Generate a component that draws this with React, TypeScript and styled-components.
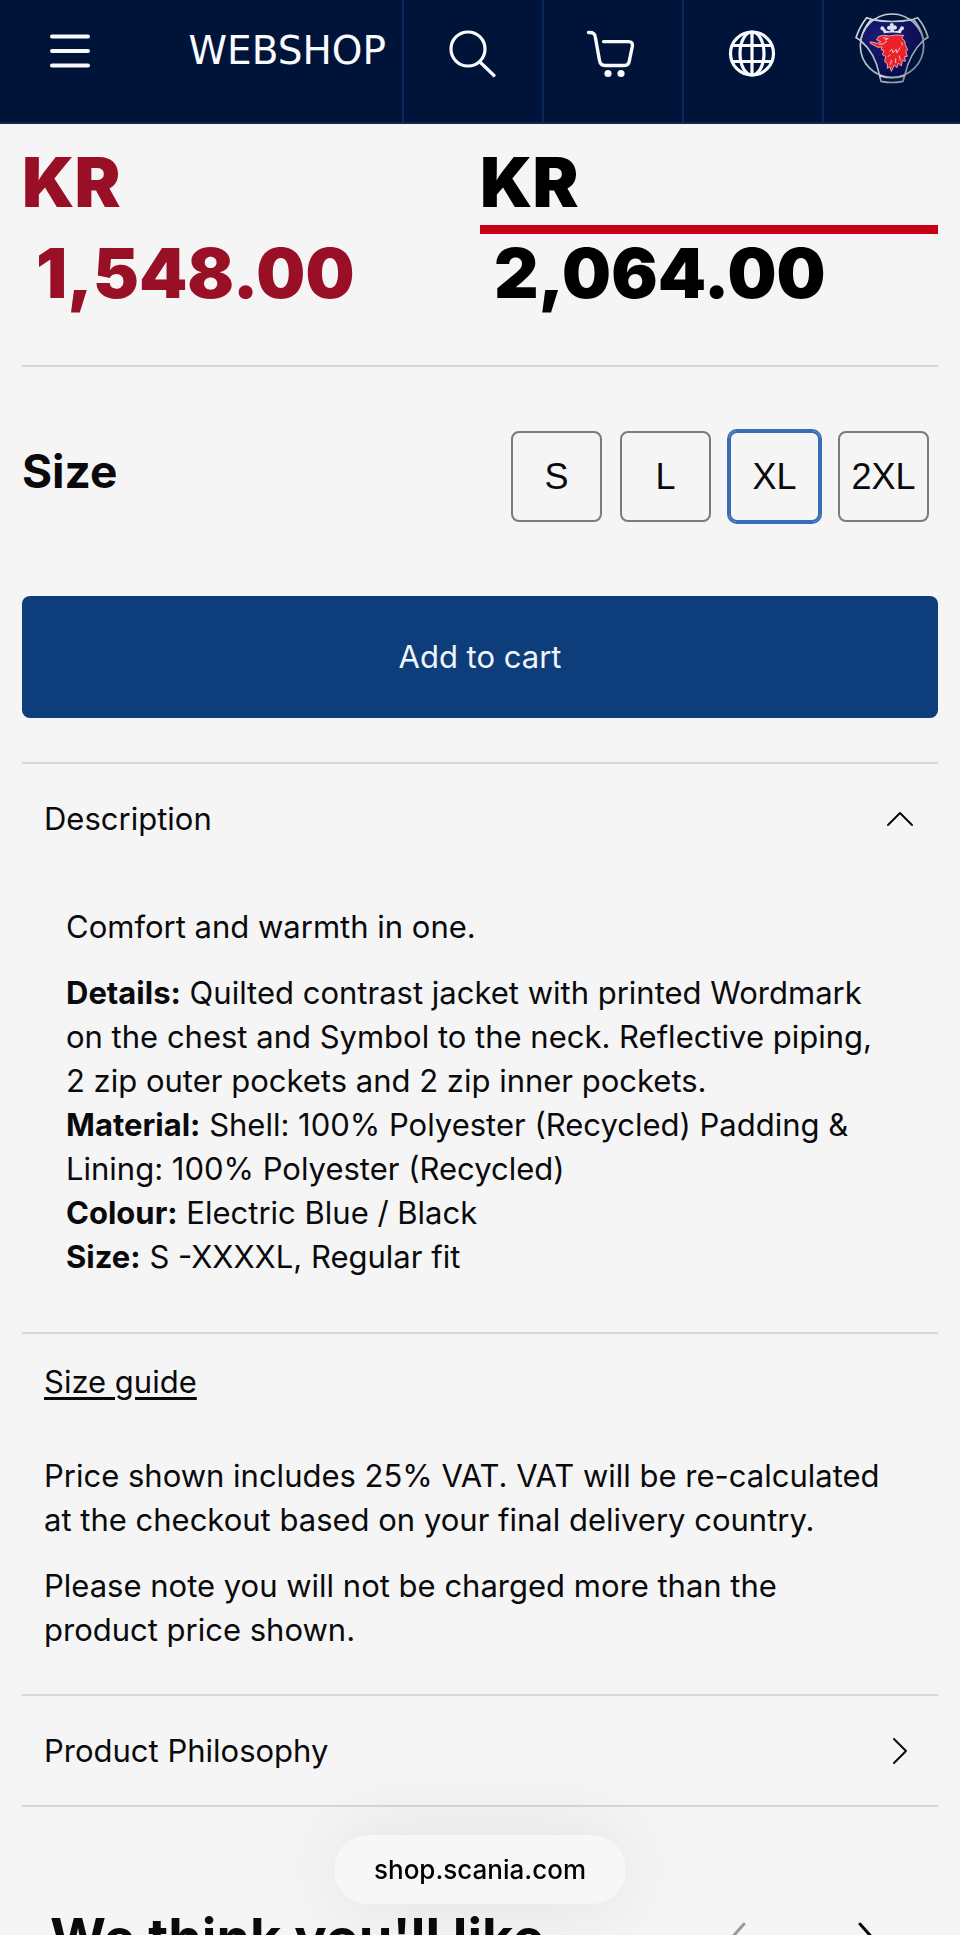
import React, { useState } from "react";
import styled, { createGlobalStyle } from "styled-components";

const sans = `Inter, "Liberation Sans", sans-serif`;
const plain = `"Liberation Sans", Arial, sans-serif`;
const wide = `"DejaVu Sans", Verdana, sans-serif`;

const GlobalStyle = createGlobalStyle`
  *, *::before, *::after { box-sizing: border-box; }
  body { margin: 0; background: #f5f5f5; }
  h2, p { margin: 0; padding: 0; }
  button { font: inherit; color: inherit; background: none; border: 0; padding: 0; cursor: pointer; }
  svg { display: block; }
`;

const Screen = styled.div`
  height: 100vh;
  overflow-x: hidden;
  overflow-y: auto;
  scrollbar-width: none;
  background: #f5f5f5;
  color: #0a0a0c;
  font-family: ${sans};
  font-size: 31px;
  line-height: 44px;
`;

const Header = styled.header`
  display: flex;
  height: 124px;
  background: #00143a;
  border-bottom: 2px solid #16264a;
  color: #f8fafd;
`;

const MenuButton = styled.button`
  flex: none;
  width: 140px;
  padding: 0 0 20px 50px;
`;

const ShopName = styled.a`
  flex: 1;
  padding: 29px 16px 0 0;
  text-align: right;
  font-family: ${wide};
  font-size: 39px;
  color: inherit;
  text-decoration: none;
`;

const HeaderCell = styled.button`
  flex: 0 0 140px;
  display: flex;
  justify-content: center;
  padding-top: 26px;
  border-left: 2px solid #08285a;
`;

const LogoCell = styled.a`
  flex: 0 0 138px;
  display: flex;
  justify-content: center;
  padding-top: 12px;
  border-left: 2px solid #08285a;
`;

const Main = styled.main`
  padding: 13px 22px 0;
`;

const Prices = styled.section`
  display: grid;
  grid-template-columns: 1fr 1fr;
  padding-bottom: 46px;
  border-bottom: 2px solid #d5d6e0;
`;

const Price = styled.div<{ $old?: boolean }>`
  position: relative;
  font-size: 69px;
  font-weight: 900;
  line-height: 91px;
  color: ${(p) => (p.$old ? "#000" : "#990f26")};

  ${(p) =>
    p.$old &&
    `&::after {
      content: "";
      position: absolute;
      left: 0;
      right: 0;
      top: calc(50% - 3px);
      height: 9px;
      background: #c80015;
    }`}
`;

const Amount = styled.span`
  display: block;
  padding-left: 14px;
`;

const SizeRow = styled.section`
  display: flex;
  align-items: center;
  justify-content: space-between;
  padding: 64px 9px 74px 0;
`;

const SizeTitle = styled.h2`
  padding-bottom: 12px;
  font-size: 46px;
  line-height: 56px;
`;

const SizeList = styled.div`
  display: flex;
  gap: 18px;
`;

const SizeButton = styled.button<{ $on: boolean }>`
  width: 91px;
  height: 91px;
  border: 2px solid ${(p) => (p.$on ? "#386cb5" : "#7b7b7b")};
  border-radius: 8px;
  box-shadow: ${(p) => (p.$on ? "0 0 0 2px #386cb5" : "none")};
  font-family: ${plain};
  font-size: 36px;
`;

const AddButton = styled.button`
  display: block;
  width: 100%;
  height: 122px;
  border-radius: 8px;
  background: #0d3d7a;
  color: #f1f5fa;
`;

const Panels = styled.div`
  margin-top: 44px;
`;

const PanelToggle = styled.button`
  display: flex;
  align-items: center;
  justify-content: space-between;
  width: 100%;
  height: 111px;
  padding: 0 24px 0 22px;
  border-top: 2px solid #d5d6e0;
`;

const PanelBody = styled.div`
  display: grid;
  gap: 22px;
  padding: 32px 44px 53px;
`;

const Notes = styled.section`
  display: grid;
  justify-items: start;
  gap: 22px;
  padding: 26px 44px 42px 22px;
  border-top: 2px solid #d5d6e0;
`;

const SizeGuide = styled.a`
  margin-bottom: 28px;
  color: inherit;
  text-underline-offset: 4px;
`;

const Related = styled.section`
  display: flex;
  justify-content: space-between;
  padding: 101px 60px 40px 28px;
  border-top: 2px solid #d5d6e0;
`;

const RelatedTitle = styled.h2`
  font-size: 54px;
  line-height: 60px;
`;

const Arrows = styled.div`
  display: flex;
  gap: 112px;
  padding-top: 8px;
`;

const AddressPill = styled.div`
  position: fixed;
  left: 50%;
  bottom: 31px;
  transform: translateX(-50%);
  padding: 13px 40px 12px;
  border-radius: 35px;
  background: #f7f7f7;
  box-shadow: 0 0 80px rgba(0, 0, 0, 0.09);
  font-size: 26px;
  font-weight: 500;
  color: #000;
`;

const MenuIcon = () => (
  <svg width="40" height="34" viewBox="0 0 40 34" stroke="currentColor" strokeWidth="4" strokeLinecap="round">
    <path d="M2 2.4H38M2 17H38M2 31.6H38" />
  </svg>
);

const SearchIcon = () => (
  <svg width="56" height="56" viewBox="0 0 56 56" fill="none" stroke="currentColor" strokeWidth="3.2" strokeLinecap="round">
    <circle cx="23" cy="23" r="17" />
    <path d="M35.5 36.5L49 49.5" />
  </svg>
);

const CartIcon = () => (
  <svg width="56" height="56" viewBox="0 0 56 56" fill="none" stroke="currentColor" strokeWidth="3.4" strokeLinecap="round" strokeLinejoin="round">
    <path d="M3.500 6.500C8 6.200 9.800 7.500 10.300 11L14.500 34.500C15.200 38 16.700 39.500 20 39.500H39.500C42.500 39.500 43.700 38.300 44.200 35.500L47.300 20.500C47.900 17 46.600 15.600 43.500 15.600H18.500" />
    <circle cx="23" cy="47.500" r="3.600" fill="currentColor" stroke="none" />
    <circle cx="36" cy="47.500" r="3.600" fill="currentColor" stroke="none" />
  </svg>
);

const GlobeIcon = () => (
  <svg width="56" height="56" viewBox="0 0 56 56" fill="none" stroke="currentColor" strokeWidth="3.2">
    <circle cx="27" cy="27.500" r="21.500" />
    <ellipse cx="27" cy="27.500" rx="12" ry="21.500" />
    <path d="M27 6V49M7.500 19.500H46.500M7.500 35.500H46.500" />
  </svg>
);

const Emblem = () => (
  <svg width="74" height="72" viewBox="44 37 222 216" fill="none">
    <defs>
      <linearGradient id="chrome" x1="0" y1="0" x2="1" y2="1">
        <stop offset="0" stopColor="#dfe3ea" />
        <stop offset="0.6" stopColor="#a9b0be" />
        <stop offset="1" stopColor="#6f7a8f" />
      </linearGradient>
      <radialGradient id="field" cx="0.35" cy="0.3" r="0.8">
        <stop offset="0" stopColor="#1c1c78" />
        <stop offset="1" stopColor="#060a45" />
      </radialGradient>
    </defs>
    <path d="M90 60Q155 74 221 60Q240 80 250 118Q215 160 193 226Q155 238 118 226Q98 160 61 122Q70 85 90 60Z" fill="url(#field)" />
    <g stroke="url(#chrome)" strokeWidth="5" strokeLinejoin="round">
      <circle cx="155" cy="138" r="95" />
      <path d="M93 59L79 54Q57 82 47 114L61 123Q104 160 117 224L122 245Q155 252 188 245L194 224Q208 162 250 121L263 113Q254 80 232 54L219 59Q155 72 93 59Z" />
      <path d="M93 59Q67 88 61 123M219 59Q244 88 250 121" />
      <path d="M117 228Q155 241 194 228" />
    </g>
    <path
      d="M131 101L127 92A6 6 0 1 1 132 86L138 93L149 95L151 88A6 6 0 1 1 150 80A6 6 0 1 1 159 80A6 6 0 1 1 160 88L162 95L173 93L179 86A6 6 0 1 1 185 92L181 101Q156 96 131 101Z"
      fill="#dfe5ee"
    />
    <path
      d="M114 111Q128 104 148 109L166 106L190 107L184 115Q196 122 195 135L202 151L196 154L201 170L193 171L195 185L186 182L183 199L174 190L170 204L162 196L153 215L149 201L141 206L141 192L133 186L136 170L126 165L131 153L122 150L126 142L113 143L90 131V126L112 131L122 126L109 121Z"
      fill="#ee2028"
      stroke="#e7a9b4"
      strokeWidth="3"
      strokeLinejoin="round"
    />
    <path
      d="M116 134Q130 136 140 124M128 114L144 117L133 121M147 156L155 149L158 160L167 149L169 160L180 143M142 172L150 164M151 195L153 180M166 190V176M180 182L177 168M184 128L186 138"
      stroke="#f0c3ca"
      strokeWidth="3"
    />
  </svg>
);

const Chevron = ({ points, w, h, color = "#0a0a0c", thick = 2 }: { points: string; w: number; h: number; color?: string; thick?: number }) => (
  <svg width={w} height={h} viewBox={`0 0 ${w} ${h}`} fill="none" stroke={color} strokeWidth={thick} strokeLinecap="round" strokeLinejoin="round">
    <polyline points={points} />
  </svg>
);

const ChevronSlot = styled.span`
  display: flex;
  justify-content: center;
  width: 28px;
`;

const sizes = ["S", "L", "XL", "2XL"];

export default function App() {
  const [size, setSize] = useState("XL");
  const [open, setOpen] = useState(true);

  return (
    <Screen>
      <GlobalStyle />
      <Header>
        <MenuButton aria-label="Menu">
          <MenuIcon />
        </MenuButton>
        <ShopName href="#shop">WEBSHOP</ShopName>
        <HeaderCell aria-label="Search">
          <SearchIcon />
        </HeaderCell>
        <HeaderCell aria-label="Cart">
          <CartIcon />
        </HeaderCell>
        <HeaderCell aria-label="Language">
          <GlobeIcon />
        </HeaderCell>
        <LogoCell href="#home" aria-label="Scania">
          <Emblem />
        </LogoCell>
      </Header>

      <Main>
        <Prices>
          <Price>
            KR <Amount>1,548.00</Amount>
          </Price>
          <Price $old>
            KR <Amount>2,064.00</Amount>
          </Price>
        </Prices>

        <SizeRow>
          <SizeTitle id="size-title">Size</SizeTitle>
          <SizeList role="group" aria-labelledby="size-title">
            {sizes.map((s) => (
              <SizeButton key={s} $on={s === size} aria-pressed={s === size} onClick={() => setSize(s)}>
                {s}
              </SizeButton>
            ))}
          </SizeList>
        </SizeRow>

        <AddButton>Add to cart</AddButton>

        <Panels>
          <PanelToggle aria-expanded={open} onClick={() => setOpen(!open)}>
            Description
            <ChevronSlot>
              <Chevron points="2,14 14,2 26,14" w={28} h={16} />
            </ChevronSlot>
          </PanelToggle>
          {open && (
            <PanelBody>
              <p>Comfort and warmth in one.</p>
              <p>
                <b>Details:</b> Quilted contrast jacket with printed Wordmark on the chest and Symbol to the neck.
                Reflective piping, 2 zip outer pockets and 2 zip inner pockets.
                <br />
                <b>Material:</b> Shell: 100% Polyester (Recycled) Padding &amp; Lining: 100% Polyester (Recycled)
                <br />
                <b>Colour:</b> Electric Blue / Black
                <br />
                <b>Size:</b> S -XXXXL, Regular fit
              </p>
            </PanelBody>
          )}
          <Notes>
            <SizeGuide href="#size-guide">Size guide</SizeGuide>
            <p>Price shown includes 25% VAT. VAT will be re-calculated at the checkout based on your final delivery country.</p>
            <p>Please note you will not be charged more than the product price shown.</p>
          </Notes>
          <PanelToggle aria-expanded={false}>
            Product Philosophy
            <ChevronSlot>
              <Chevron points="2,2 14,14 2,26" w={16} h={28} />
            </ChevronSlot>
          </PanelToggle>
        </Panels>

        <Related>
          <RelatedTitle>We think you'll like</RelatedTitle>
          <Arrows>
            <button aria-label="Previous">
              <Chevron points="18,2 2,20 18,38" w={20} h={40} color="#9a9a9a" thick={3} />
            </button>
            <button aria-label="Next">
              <Chevron points="2,2 18,20 2,38" w={20} h={40} thick={3} />
            </button>
          </Arrows>
        </Related>
      </Main>

      <AddressPill>shop.scania.com</AddressPill>
    </Screen>
  );
}
